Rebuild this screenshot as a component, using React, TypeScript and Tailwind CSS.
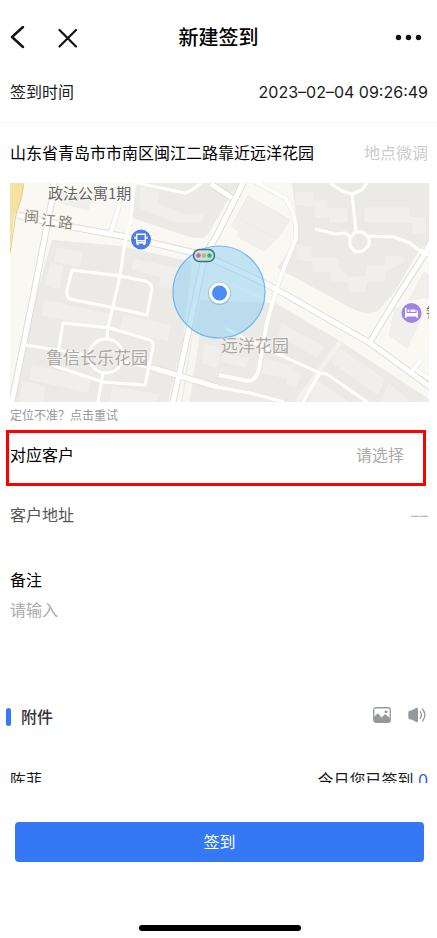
import { useState } from "react";

const BUILDINGS = [
  "140,187 160,190 158,203 186,214 206,212 202,224 172,222 138,208",
  "56,247 84,252 80,268 54,262",
  "133,258 180,268 176,290 158,287 160,277 131,270",
  "50,262 64,266 60,290 44,286",
  "44,299 112,314 109,329 40,316",
  "123,314 172,325 168,342 119,330",
  "31,364 92,378 88,393 28,380",
  "112,385 160,394 157,402 108,402",
  "23,380 46,386 44,402 18,402",
  "203,343 222,347 218,368 201,364",
  "295,192 314,192 314,200 328,200 328,208 348,208 348,223 329,223 329,218 314,218 314,207 295,205",
  "364,207 410,207 410,217 426,217 426,234 412,234 412,223 364,223",
  "296,244 312,246 312,256 339,258 339,266 348,276 366,276 366,266 385,264 385,256 404,256 405,262 386,273 386,282 367,283 367,293 348,293 348,283 330,281 330,273 312,272 312,262 296,260",
  "281,322 325,346 318,358 278,337",
  "262,358 293,365 293,370 302,373 297,388 286,385 286,379 262,374",
  "340,348 386,379 378,396 330,362",
  "388,382 412,402 380,402",
  "315,378 350,402 308,402",
  "222,352 250,358 246,368 220,362",
];

// residential paths, drawn without casing
const PATHS = [
  "M137 183 L185 193 L192 190 L201 183",
  "M134 183 L131 218 L125 242 L120 276 L108 328 L107 338",
  "M103 373 L98 402",
  "M72 270 L120 276 L145 281 Q152 283 152 289 L147 315 L115 308 L70 299 Q66 297 67 290 Z",
  "M63 323 L110 328 L150 340 Q154 342 153 348 L145 385 L103 382 L55 366 L59 347 Z",
  "M25 345 L88 355 M122 361 L153 368",
  "M330 183 L342 191 L352 194 L356 231",
  "M352 194 L362 190 L367 183",
  "M315 229 L335 234 L345 233 L351 237",
  "M369 236 L394 237 L410 243 L424 254",
  "M232 285 L274 303",
  "M225 328 L248 340 L280 355 L320 373 L327 374 L367 402",
  "M320 373 L303 402",
  "M217 387 L250 393 L284 402",
];

const ROADS = [
  "M54 178 L52 200 L33 298 L11 406",
  "M17 215 L72 227 L127 237 L195 253 L217 261 L264 283 L283 293 L370 343 L433 389",
  "M245 179 L217 235 L205 255 L193 310 L179 375 L172 406",
  "M211 184 L232 198",
  "M433 238 L424 255 L396 299 L370 342",
  "M153 368 L180 376 L217 387",
];

const SIDE_ROADS = [
  "M127 180 L111 232",
  "M252 180 L285 198 Q293 208 296 225 L296 238 L280 278 L274 298 L267 322 L260 362 Q258 381 248 381 L219 375",
  "M433 381 L416 370 M421 360 L412 371",
  "M433 257 L420 250",
];

function LocationMap() {
  return (
    <svg viewBox="10 183 419 219" className="block w-full" role="img" aria-label="当前位置地图">
      <rect x="10" y="183" width="419" height="219" fill="#faf8f3" />
      <g fill="#ebeae6">
        <path d="M137 183 L130 217 L190 237 Q203 240 208 234 L220 214 L238 183 Z" />
        <path d="M52 240 L120 246 L192 262 L183 340 L168 402 L14 402 L35 300 Z" />
        <path d="M292 183 L298 230 L297 240 L277 268 L355 310 Q366 315 378 311 L396 290 L418 252 L429 240 V183 Z" />
        <path d="M200 300 L275 303 L340 341 L429 399 V402 H181 L190 345 Z" />
        <path d="M217 190 L229 198 L217 215 Z M224 183 H240 L233 193 Z" />
      </g>
      <path d="M55 183 H133 L120 236 L57 223 Z" fill="#faf8f3" />
      <g fill="#f0efeb" stroke="#e9e7e3" strokeWidth="0.5">
        {BUILDINGS.map((points) => (
          <polygon key={points} points={points} />
        ))}
        <path d="M248 196 L290 220 L272 244 L264 251 L238 237 L238 231 L231 226 Z" />
        <path d="M248 196 L290 220 L277 239 L237 217 Z" />
        <path d="M395 308 L424 313 L407 348 L389 335 Z" />
        <path d="M424 272 L429 275 V297 L409 300 Z" />
        <path d="M62 190 L92 198 L88 210 L60 203 Z" />
      </g>
      <path d="M340 342 L297 402" stroke="#f4f2ec" strokeWidth="5" />
      <path d="M197 330 L186 402" stroke="#f8f6f0" strokeWidth="7" />

      <path d="M10 183 H24 L22 198 L14 216 L10 253 Z" fill="#f3e2a2" />
      <path d="M24 183 L21 199 L16 214 L10 253" fill="none" stroke="#e9cf7e" strokeWidth="1" />

      <g fill="none" strokeLinejoin="round">
        <g stroke="#e0ddd3" strokeWidth="7">
          {ROADS.map((d) => (
            <path key={d} d={d} />
          ))}
          {SIDE_ROADS.map((d) => (
            <path key={d} d={d} stroke="#e6e3db" strokeWidth="5" />
          ))}
        </g>
        <g stroke="#fff" strokeWidth="3">
          {PATHS.map((d) => (
            <path key={d} d={d} />
          ))}
          <circle cx="106" cy="356" r="17" />
          <path d="M355 232 L363 232 L369 238 V245 L363 251 L355 252 L350 246 V238 Z" />
        </g>
        <g stroke="#fff" strokeWidth="5">
          {ROADS.map((d) => (
            <path key={d} d={d} />
          ))}
          {SIDE_ROADS.map((d) => (
            <path key={d} d={d} strokeWidth="4" />
          ))}
        </g>
      </g>

      <circle cx="219" cy="292" r="46" fill="#8ed0f2" fillOpacity="0.52" stroke="#6db6f2" strokeWidth="1.2" />

      <g fontFamily='"Noto Sans CJK SC", sans-serif' stroke="#faf8f3" strokeWidth="2" paintOrder="stroke">
        <text x="48" y="199" fontSize="15" fill="#66666a">政法公寓1期</text>
        <g fontSize="15" fill="#8d857b">
          <text x="24" y="222" transform="rotate(4 31 217)">闽</text>
          <text x="41" y="226" transform="rotate(4 48 221)">江</text>
          <text x="58" y="228" transform="rotate(4 65 223)">路</text>
        </g>
        <g fontSize="17" fill="#aaa8a6" strokeOpacity="0.5">
          <text x="46" y="364">鲁信长乐花园</text>
          <text x="221" y="352">远洋花园</text>
        </g>
        <text x="426" y="317" fontSize="13" fill="#77777a">锦</text>
      </g>

      <circle cx="141" cy="239.500" r="10" fill="#4a7de8" />
      <g fill="none" stroke="#fff" strokeWidth="1.4" strokeLinejoin="round">
        <path d="M136.700 234.200 H145.300 V242.700 H136.700 Z M136.700 240.700 H145.300" />
        <path d="M135 236.500 V239 M147 236.500 V239" />
        <path d="M137.700 243 V245 M144.300 243 V245" strokeWidth="2" />
      </g>

      <rect x="193.500" y="249.500" width="21" height="12" rx="6" fill="#c3dfe9" stroke="#466b7d" strokeWidth="1.5" />
      <circle cx="198.500" cy="255.500" r="2.300" fill="#c2718c" />
      <circle cx="204" cy="255.500" r="2.300" fill="#c8b859" />
      <circle cx="209.500" cy="255.500" r="2.300" fill="#3fae74" />

      <circle cx="411.500" cy="313" r="10" fill="#a183e6" />
      <path
        d="M405 308 H406.500 V313 H416.500 V310 Q418 310 418 311.500 V318 H416.500 V316.500 H406.500 V318 H405 Z"
        fill="#fff"
      />
      <path d="M407.500 309.500 H409.500 V312 H407.500 Z M410.500 309.500 H415.500 V312 H410.500 Z" fill="#fff" fillOpacity="0.9" />

      <circle cx="219.500" cy="293.500" r="11.500" fill="#6d8fa0" fillOpacity="0.35" />
      <circle cx="219.500" cy="293" r="10.500" fill="#fff" />
      <circle cx="219.500" cy="293" r="7.500" fill="#4a8df6" />
    </svg>
  );
}

function ImageIcon() {
  return (
    <svg viewBox="0 0 18 16" className="h-4 w-[18px]" aria-hidden="true">
      <rect x="0.750" y="0.750" width="16.500" height="14.500" rx="2" fill="none" stroke="#96999c" strokeWidth="1.300" />
      <path d="M1 10 L4.200 6.800 Q5 6.200 5.700 6.900 L8.500 10.500 L11.500 7.500 Q12.300 7 13 7.700 L17 11.200 V13.500 Q17 15 15.500 15 H2.500 Q1 15 1 13.500 Z" fill="#96999c" />
      <circle cx="13" cy="4.700" r="1.500" fill="#96999c" />
    </svg>
  );
}

function SpeakerIcon() {
  return (
    <svg viewBox="0 0 18 16" className="h-4 w-[18px]" aria-hidden="true">
      <path d="M2 3.500 H3.500 L8 1 Q10 0.200 10 2.200 V13.800 Q10 15.800 8 15 L3.500 12.500 H2 Q0.300 12 0.300 10.500 V5.500 Q0.300 4 2 3.500 Z" fill="#96999c" />
      <path d="M12.200 4.500 Q14.600 8 12.200 11.500 M14.600 2 Q19 8 14.600 14" fill="none" stroke="#96999c" strokeWidth="1.300" strokeLinecap="round" />
    </svg>
  );
}

export default function App() {
  const [remark, setRemark] = useState("");

  return (
    <div className="flex h-screen flex-col bg-white font-['Inter','Noto_Sans_CJK_SC',sans-serif] text-base leading-6 text-[#1a1a1a]">
      <header className="grid h-[62px] shrink-0 grid-cols-3 items-center px-2 pt-[14px]">
        <div className="flex items-center gap-7">
          <button type="button" aria-label="返回">
            <svg viewBox="0 0 20 24" className="h-6 w-5" fill="none" stroke="#111" strokeWidth="2.400" strokeLinecap="round" strokeLinejoin="round">
              <path d="M15 1 L4 11 L15 21" />
            </svg>
          </button>
          <button type="button" aria-label="关闭">
            <svg viewBox="0 0 24 24" className="h-6 w-6" fill="none" stroke="#111" strokeWidth="2.200" strokeLinecap="round">
              <path d="M3.500 4 L20 20.500 M20 4 L3.500 20.500" />
            </svg>
          </button>
        </div>
        <h1 className="text-center text-xl leading-6 font-medium text-black">新建签到</h1>
        <button type="button" aria-label="更多" className="justify-self-end">
          <svg viewBox="0 0 40 24" className="h-6 w-10" fill="#111">
            <circle cx="9.500" cy="11.500" r="2.700" />
            <circle cx="19.500" cy="11.500" r="2.700" />
            <circle cx="29.500" cy="11.500" r="2.700" />
          </svg>
        </button>
      </header>

      <main className="min-h-0 flex-1 overflow-hidden">
        <div className="flex h-[61px] items-center justify-between border-b border-[#f5f5f5] pr-[9px] pl-[10px]">
          <span>签到时间</span>
          <time>2023–02–04 09:26:49</time>
        </div>
        <div className="flex h-[60px] items-center justify-between pr-[9px] pl-[10px] text-black">
          <span>山东省青岛市市南区闽江二路靠近远洋花园</span>
          <button type="button" className="text-[#ccc]">地点微调</button>
        </div>

        <div className="pr-2 pl-[10px]">
          <LocationMap />
          <button type="button" className="mt-1 block text-xs leading-5 text-[#999]">
            定位不准？点击重试
          </button>
        </div>

        <div className="mt-1 mr-[11px] ml-[6px] flex h-14 items-start justify-between border-3 border-[#fe0000] pt-[10px] pr-[18px] pl-px">
          <label htmlFor="customer" className="text-black">对应客户</label>
          <select id="customer" defaultValue="" className="appearance-none bg-transparent text-[#aaa]">
            <option value="">请选择</option>
          </select>
        </div>

        <div className="mt-[17px] flex items-center justify-between pr-[9px] pl-[10px]">
          <span className="text-[#555]">客户地址</span>
          <span className="flex gap-px text-[#bbb]">
            <span>–</span>
            <span>–</span>
          </span>
        </div>

        <div className="mt-[41px] px-[10px]">
          <label htmlFor="remark" className="block text-black">备注</label>
          <textarea
            id="remark"
            value={remark}
            onChange={(e) => setRemark(e.target.value)}
            placeholder="请输入"
            className="mt-[6px] block h-[72px] w-full resize-none outline-none placeholder:text-[#aaa]"
          />
        </div>

        <div className="mt-[35px] flex items-center justify-between pr-[11px] pl-[6px]">
          <h2 className="flex items-center gap-[10px] font-medium text-[#333]">
            <span className="h-[18px] w-[5px] rounded-sm bg-[#3478f6]" />
            附件
          </h2>
          <div className="flex gap-[17px] pb-1">
            <button type="button" aria-label="添加图片"><ImageIcon /></button>
            <button type="button" aria-label="添加语音"><SpeakerIcon /></button>
          </div>
        </div>

        <div className="mt-[39px] flex items-center justify-between pr-[9px] pl-[10px]">
          <span>陈菲</span>
          <span>
            今日您已签到 <span className="text-[#3355f0]">0</span>
          </span>
        </div>
      </main>

      <footer className="flex h-[155px] shrink-0 flex-col items-center justify-between pt-[39px] pr-[13px] pb-[7px] pl-[15px]">
        <button type="button" className="h-10 w-full rounded bg-[#3478f6] text-white">
          签到
        </button>
        <div className="h-[6px] w-[162px] rounded-full bg-black" />
      </footer>
    </div>
  );
}
